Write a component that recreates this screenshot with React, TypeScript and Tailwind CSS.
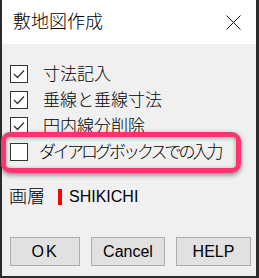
import React from 'react';

const Check: React.FC<{ checked: boolean }> = ({ checked }) => (
  <span className="w-[18px] h-[18px] border border-[#333] bg-white flex items-center justify-center shrink-0">
    {checked && (
      <svg width="12" height="10" viewBox="0 0 12 10" fill="none">
        <path d="M1 5 L4.5 8.5 L11 1.5" stroke="#333" strokeWidth="1.3" />
      </svg>
    )}
  </span>
);

const App: React.FC = () => {
  const rows = ['寸法記入', '垂線と垂線寸法', '円内線分削除'];

  return (
    <div className="relative w-[259px] h-[278px] bg-[#f0f0f0] border-l-2 border-r-[3px] border-b-2 border-[#2b2b2b] flex flex-col font-['Liberation_Sans','Noto_Sans_CJK_JP',sans-serif] font-light text-black">
      {/* タイトルバー */}
      <div className="h-[44px] bg-white flex items-center justify-between pl-[11px] pr-[15px]">
        <span className="text-[18px] leading-none">敷地図作成</span>
        <svg width="15" height="15" viewBox="0 0 15 15">
          <path d="M0.5 0.5 L14.5 14.5 M14.5 0.5 L0.5 14.5" stroke="#111" strokeWidth="1" />
        </svg>
      </div>

      {/* チェック項目 */}
      <div className="pt-[17px] pl-[8px] flex flex-col">
        {rows.map((r) => (
          <div key={r} className="h-[26px] flex items-center gap-[15px]">
            <Check checked />
            <span className="text-[17px] leading-none">{r}</span>
          </div>
        ))}
        <div className="h-[26px] flex items-center gap-[11px]">
          <Check checked={false} />
          <span className="text-[17px] leading-none tracking-[-3px]">ダイアログボックスでの入力</span>
        </div>
      </div>

      {/* 画層 */}
      <div className="mt-[20px] h-[24px] pl-[7px] flex items-center">
        <span className="text-[18px] leading-none">画層</span>
        <span className="ml-[13px] w-[4px] h-[16px] bg-[#ff0000]" />
        <span className="ml-[7px] text-[16px] leading-none">SHIKICHI</span>
      </div>

      {/* ボタン */}
      <div className="mt-[28px] pl-[8px] flex gap-[11px] text-[16px]">
        <button className="w-[70px] h-[29px] bg-[#e1e1e1] border border-[#adadad] tracking-[2px]">OK</button>
        <button className="w-[74px] h-[29px] bg-[#e1e1e1] border border-[#adadad]">Cancel</button>
        <button className="w-[75px] h-[29px] bg-[#e1e1e1] border border-[#adadad]">HELP</button>
      </div>

      {/* 強調枠 */}
      <div className="absolute left-[-1px] top-[132px] w-[240px] h-[41px] rounded-[9px] border-[5px] border-[#ff3370] shadow-[0_2px_5px_rgba(0,0,0,0.45),inset_0_1px_4px_rgba(0,0,0,0.35)]" />
    </div>
  );
};

export default App;
